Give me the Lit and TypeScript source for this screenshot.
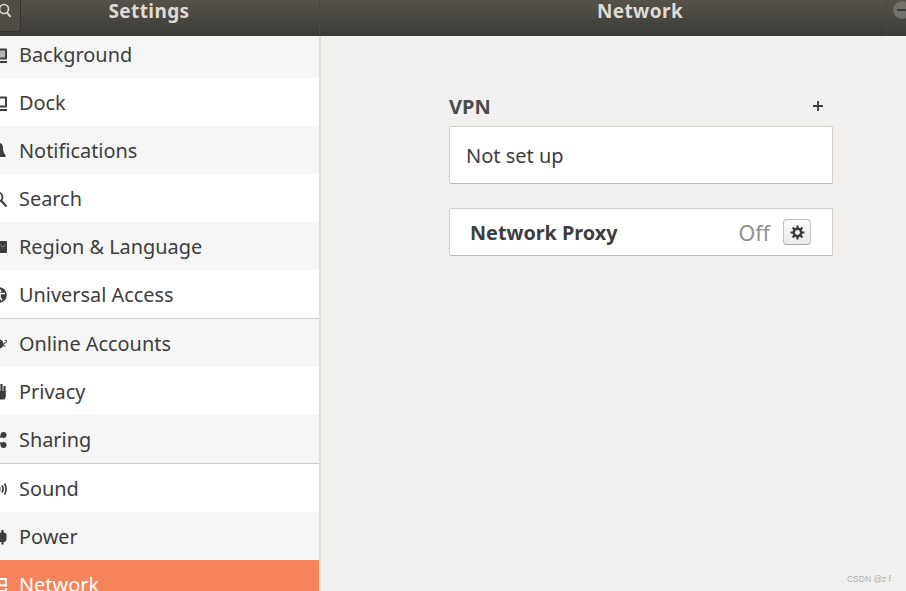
import { css, html, LitElement, svg } from "lit";
import { customElement } from "lit/decorators.js";

// icons are 16x16, the sidebar cuts off their left part
const icons: Record<string, unknown> = {
  background: svg`<path d="M6 1.500h9a1 1 0 0 1 1 1v9a1 1 0 0 1-1 1H6z" fill="#3d3d3d"/><rect x="6" y="3.500" width="8" height="7" fill="#b5b5b5"/><rect x="6" y="14" width="10" height="2" fill="#3d3d3d"/>`,
  dock: svg`<path d="M6 1.500h9a1 1 0 0 1 1 1v9a1 1 0 0 1-1 1H6v-2h8v-7H6z" fill="#3d3d3d"/><rect x="6" y="14" width="10" height="2" fill="#3d3d3d"/>`,
  bell: svg`<path d="M8 0c3 0 4 2.500 4 5 0 3.500 1 5.500 2.500 7v2H2v-2C3.500 10.500 4 8.500 4 5c0-2.500 1-5 4-5z" fill="#3d3d3d"/>`,
  search: svg`<circle cx="7" cy="6" r="4.500" fill="none" stroke="#3d3d3d" stroke-width="1.800"/><path d="M10 9.500l5.500 6" stroke="#3d3d3d" stroke-width="2.200"/>`,
  region: svg`<rect x="1" y="2" width="15" height="12" rx="1" fill="#3d3d3d"/><path d="M10 5.500c.5 3 3 3 4 0" fill="none" stroke="#a0a0a0" stroke-width="1"/>`,
  access: svg`<circle cx="8" cy="8" r="7.800" fill="#3d3d3d"/><circle cx="9" cy="4" r="1.400" fill="#fff"/><path d="M4 6.500h10M9 6.500v3.500l-2 3.500M9 10l2 3.500" fill="none" stroke="#fff" stroke-width="1.500"/>`,
  online: svg`<circle cx="8" cy="8" r="4.500" fill="#3d3d3d"/><path d="M13.500 4.500c1.500-.5 2.500 0 2 1.200-.5 1.200-2.500 1.500-3 2.800s1 2 2 1.500" fill="none" stroke="#555" stroke-width="1.100"/>`,
  privacy: svg`<path d="M7.500 7V3M10.500 8V0M13.500 8V2" stroke="#3d3d3d" stroke-width="2.200" fill="none"/><path d="M3 9l3 6.500h7.500l1.300-2.500V7H6v3z" fill="#3d3d3d"/>`,
  sharing: svg`<circle cx="12.500" cy="3" r="3" fill="#3d3d3d"/><circle cx="12.500" cy="13" r="3" fill="#3d3d3d"/><circle cx="4" cy="8" r="3" fill="#3d3d3d"/><path d="M12.500 3L4 8l8.500 5" fill="none" stroke="#3d3d3d" stroke-width="1.600"/>`,
  sound: svg`<path d="M11 4.500c1.300 2 1.300 5 0 7M13.500 2.500c1.900 3.200 1.900 7.800 0 11" fill="none" stroke="#3d3d3d" stroke-width="1.700"/><rect x="6" y="6" width="3.500" height="4" fill="#3d3d3d"/>`,
  power: svg`<path d="M5 3.500h7.500a3 3 0 0 1 3 3v3.500a3 3 0 0 1-3 3H5z" fill="#3d3d3d"/><path d="M7 1v3M11.500 1v3M7 12.500v3M11.500 12.500v3" stroke="#3d3d3d" stroke-width="2.200"/>`,
  network: svg`<path d="M8 2h7v6.500h-3.500M11.500 8.500H8.500V5.500M8 14h7v-3" fill="none" stroke="#fff" stroke-width="2"/>`,
};

const rows = [
  { icon: "background", label: "Background" },
  { icon: "dock", label: "Dock" },
  { icon: "bell", label: "Notifications" },
  { icon: "search", label: "Search" },
  { icon: "region", label: "Region & Language" },
  { icon: "access", label: "Universal Access", sep: true },
  { icon: "online", label: "Online Accounts" },
  { icon: "privacy", label: "Privacy" },
  { icon: "sharing", label: "Sharing", sep: true },
  { icon: "sound", label: "Sound" },
  { icon: "power", label: "Power" },
  { icon: "network", label: "Network", active: true },
];

@customElement("app-root")
export class AppRoot extends LitElement {
  static styles = css`
    :host {
      display: block;
      position: relative;
      width: 906px;
      height: 591px;
      overflow: hidden;
      background: #f2f1ef;
      color: #3d3d3d;
      font-family: "Noto Sans", "Open Sans", sans-serif;
    }

    .titlebar {
      display: flex;
      height: 36px;
      background: linear-gradient(#55524a, #3c3b37);
      color: #dfdbd2;
      font-weight: 700;
      font-size: 19px;
      letter-spacing: 0.4px;
    }

    .title-left {
      display: flex;
      flex: none;
      width: 319px;
      border-right: 1px solid #4a4843;
    }

    .search-btn {
      display: flex;
      align-items: flex-start;
      justify-content: flex-end;
      flex: none;
      width: 21px;
      height: 32px;
      box-sizing: border-box;
      border: 1px solid #34332f;
      border-width: 0 1px 1px 0;
      border-radius: 0 0 4px 0;
      background: #4f4d46;
      padding: 3px 9px 0 0;
    }

    .search-btn svg {
      flex: none;
    }

    .title-left .title {
      flex: 1;
      text-align: center;
      line-height: 22px;
      margin-right: 42px;
    }

    .title-right {
      flex: 1;
      display: flex;
      min-width: 0;
    }

    .title-right .title {
      flex: 1;
      text-align: center;
      line-height: 22px;
      padding-left: 74px;
    }

    .window-btns {
      flex: none;
      box-sizing: border-box;
      width: 20px;
      border-left: 1px solid #4a4843;
      padding: 1px 0 0 6px;
    }

    .min {
      display: flex;
      align-items: center;
      justify-content: center;
      width: 18px;
      height: 18px;
      border-radius: 50%;
      background: #716f69;
    }

    .min i {
      flex: none;
      width: 10px;
      height: 2px;
      background: #3c3b37;
    }

    .body {
      display: flex;
      height: 555px;
    }

    .sidebar {
      flex: none;
      width: 319px;
      overflow: hidden;
      border-right: 2px solid #e0dedb;
      background: #fff;
    }

    .list {
      margin-top: -6px;
    }

    .row {
      display: flex;
      align-items: center;
      gap: 12px;
      height: 48px;
      font-size: 19.9px;
      line-height: 46px;
      white-space: nowrap;
    }

    .row span {
      padding-top: 2px;
    }

    .row:nth-child(odd) {
      background: #f6f6f6;
    }

    .row:nth-child(10) {
      background: #fff;
    }

    .row:nth-child(11) {
      background: #f6f6f6;
    }

    .row.sep {
      height: 49px;
      box-sizing: border-box;
      border-bottom: 1px solid #cfcdca;
    }

    .row.active {
      background: #f5845a;
      color: #fff;
    }

    .row svg {
      flex: none;
      width: 16px;
      height: 16px;
      margin-left: -9px;
      position: relative;
      top: 1px;
    }

    .content {
      flex: 1;
      padding: 52px 0 0 128px;
    }

    .vpn-head {
      display: flex;
      align-items: center;
      justify-content: space-between;
      width: 384px;
      height: 38px;
      padding-bottom: 2px;
      box-sizing: border-box;
      font-size: 20px;
      font-weight: 700;
      color: #4c4c4c;
    }

    .plus {
      width: 10px;
      height: 10px;
      margin-right: 10px;
    }

    .card {
      display: flex;
      align-items: center;
      box-sizing: border-box;
      width: 384px;
      background: #fff;
      border: 1px solid #d3cfc9;
      border-bottom-color: #bdb9b3;
      border-radius: 2px;
    }

    .card.vpn {
      height: 58px;
      padding-left: 16px;
      font-size: 20px;
    }

    .card.proxy {
      height: 48px;
      margin-top: 24px;
      padding: 0 21px 0 20px;
      font-size: 20px;
    }

    .proxy b {
      flex: 1;
      font-size: 19.8px;
      font-weight: 700;
    }

    .off {
      color: #92918d;
      font-size: 21.5px;
      margin-right: 13px;
    }

    .gear {
      display: flex;
      align-items: center;
      justify-content: center;
      box-sizing: border-box;
      width: 28px;
      height: 26px;
      border: 1px solid #c4c0ba;
      border-bottom-color: #a9a59f;
      border-radius: 4px;
      background: linear-gradient(#fafafa, #eeecea);
    }

    .watermark {
      position: absolute;
      right: 15px;
      bottom: 7px;
      font: 8.5px "Liberation Sans", sans-serif;
      color: #b0b0b0;
    }
  `;

  render() {
    return html`
      <div class="titlebar">
        <div class="title-left">
          <div class="search-btn">
            <svg width="13" height="15" viewBox="0 0 13 15">
              <circle cx="6" cy="6" r="4.500" fill="none" stroke="#dfdbd2" stroke-width="1.700" />
              <path d="M9 9.500l3.500 4.500" stroke="#dfdbd2" stroke-width="2" />
            </svg>
          </div>
          <div class="title">Settings</div>
        </div>
        <div class="title-right">
          <div class="title">Network</div>
          <div class="window-btns"><div class="min"><i></i></div></div>
        </div>
      </div>
      <div class="body">
        <div class="sidebar">
          <div class="list">
            ${rows.map(
              (r) => html`
                <div class="row ${r.sep ? "sep" : ""} ${r.active ? "active" : ""}">
                  <svg viewBox="0 0 16 16">${icons[r.icon]}</svg>
                  <span>${r.label}</span>
                </div>
              `
            )}
          </div>
        </div>
        <div class="content">
          <div class="vpn-head">
            <span>VPN</span>
            <svg class="plus" viewBox="0 0 10 10">
              <path d="M5 0v10M0 5h10" stroke="#3d3d3d" stroke-width="1.800" />
            </svg>
          </div>
          <div class="card vpn">Not set up</div>
          <div class="card proxy">
            <b>Network Proxy</b>
            <span class="off">Off</span>
            <div class="gear">
              <svg width="15" height="15" viewBox="0 0 14 14">
                <circle cx="7" cy="7" r="3.500" fill="none" stroke="#3d3d3d" stroke-width="2.400" />
                <path
                  d="M7 .5v13M.5 7h13M2.400 2.400l9.200 9.200M11.600 2.400l-9.200 9.200"
                  stroke="#3d3d3d"
                  stroke-width="2"
                  stroke-dasharray="2.600 7.800 2.600"
                />
              </svg>
            </div>
          </div>
        </div>
      </div>
      <div class="watermark">CSDN @z f</div>
    `;
  }
}
